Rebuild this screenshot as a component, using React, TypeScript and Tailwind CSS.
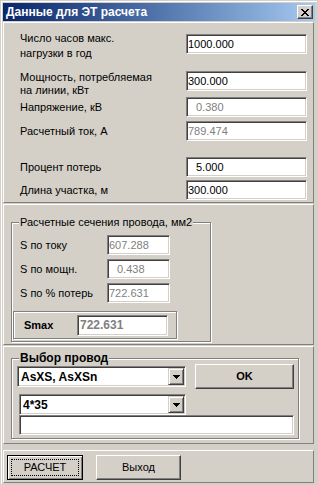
import React from "react";

type EditProps = {
  text?: string;
  gray?: boolean;
  className: string;
};

// sunken win9x edit box
function Edit({ text = "", gray, className }: EditProps) {
  return (
    <div
      className={`flex shrink-0 items-center overflow-hidden whitespace-pre border border-t-[#808080] border-l-[#808080] border-b-white border-r-white bg-white leading-none shadow-[inset_1px_1px_0_#404040,inset_-1px_-1px_0_#d4d0c8] ${
        gray ? "text-[#808080]" : "text-black"
      } ${className}`}
    >
      {text}
    </div>
  );
}

function DownArrow() {
  return (
    <svg width="7" height="4" viewBox="0 0 7 4" shapeRendering="crispEdges" fill="#000">
      <rect x="0" y="0" width="7" height="1" />
      <rect x="1" y="1" width="5" height="1" />
      <rect x="2" y="2" width="3" height="1" />
      <rect x="3" y="3" width="1" height="1" />
    </svg>
  );
}

function CloseGlyph() {
  const rows = [
    [0, 6],
    [1, 5],
    [2, 4],
    [3, 3],
    [2, 4],
    [1, 5],
    [0, 6],
  ];
  return (
    <svg width="8" height="7" viewBox="0 0 8 7" shapeRendering="crispEdges" fill="#000">
      {rows.map(([a, b], i) => (
        <g key={i}>
          <rect x={a} y={i} width="2" height="1" />
          <rect x={b} y={i} width="2" height="1" />
        </g>
      ))}
    </svg>
  );
}

function Combo({ text, className }: { text: string; className: string }) {
  return (
    <div
      className={`flex shrink-0 items-stretch border border-t-[#808080] border-l-[#808080] border-b-white border-r-white bg-white p-[1px] shadow-[inset_1px_1px_0_#404040,inset_-1px_-1px_0_#d4d0c8] ${className}`}
    >
      <span className="flex flex-1 items-center pl-[2px] text-[12px] font-bold leading-none">{text}</span>
      <div className="flex w-[16px] items-center justify-center border border-t-[#d4d0c8] border-l-[#d4d0c8] border-b-[#404040] border-r-[#404040] bg-[#d4d0c8] shadow-[inset_1px_1px_0_#fff,inset_-1px_-1px_0_#808080]">
        <DownArrow />
      </div>
    </div>
  );
}

function Panel({ className, children }: { className: string; children?: React.ReactNode }) {
  return (
    <div className={`w-[311px] border border-t-white border-l-white border-b-[#808080] border-r-[#808080] ${className}`}>
      {children}
    </div>
  );
}

function Group({ title, bold, className, children }: { title: string; bold?: boolean; className: string; children?: React.ReactNode }) {
  return (
    <div className={`relative border border-[#808080] shadow-[inset_1px_1px_0_#fff,1px_1px_0_#fff] ${className}`}>
      <span
        className={`absolute left-[7px] top-[-8px] bg-[#d4d0c8] px-[1px] leading-[14px] ${
          bold ? "text-[12px] font-bold" : "text-[11px]"
        }`}
      >
        {title}
      </span>
      {children}
    </div>
  );
}

function Row({ label, className, labelClass, children }: { label: React.ReactNode; className: string; labelClass: string; children: React.ReactNode }) {
  return (
    <div className={`flex h-[20px] items-center ${className}`}>
      <div className={`shrink-0 ${labelClass}`}>{label}</div>
      {children}
    </div>
  );
}

export default function App() {
  return (
    <div className="h-[485px] w-[318px] overflow-hidden bg-[#d4d0c8] p-[1px] font-['Liberation_Sans',Arial,sans-serif] text-[11px] text-black">
      <div className="h-full border-l border-t border-white pl-[1px] pt-[1px]">
        {/* Title bar */}
        <div className="flex h-[18px] w-[312px] items-center bg-linear-to-r from-[#0a246a] to-[#a6caf0] pl-[3px]">
          <span className="flex-1 text-[12px] font-bold leading-none text-white">Данные для ЭТ расчета</span>
          <div className="mr-[2px] flex h-[14px] w-[16px] items-center justify-center border border-t-white border-l-white border-b-[#404040] border-r-[#404040] bg-[#d4d0c8] shadow-[inset_-1px_-1px_0_#808080]">
            <CloseGlyph />
          </div>
        </div>

        {/* Input parameters */}
        <Panel className="mt-[1px] h-[181px]">
          <Row
            className="mt-[11px]"
            labelClass="w-[182px] pl-[16px] pt-[4px] leading-[15px]"
            label={
              <>
                Число часов макс.
                <br />
                нагрузки в год
              </>
            }
          >
            <Edit text="1000.000" className="h-full w-[121px] pl-[1px]" />
          </Row>
          <Row
            className="mt-[17px]"
            labelClass="w-[182px] pl-[16px] pt-[5px] leading-[13px]"
            label={
              <>
                Мощность, потребляемая
                <br />
                на линии, кВт
              </>
            }
          >
            <Edit text="300.000" className="h-full w-[121px] pl-[1px]" />
          </Row>
          <Row className="mt-[6px]" labelClass="w-[182px] pl-[16px] leading-[13px]" label="Напряжение, кВ">
            <Edit text="0.380" gray className="h-full w-[121px] pl-[9px]" />
          </Row>
          <Row className="mt-[4px]" labelClass="w-[182px] pl-[16px] leading-[13px]" label="Расчетный ток, А">
            <Edit text="789.474" gray className="h-full w-[121px] pl-[1px]" />
          </Row>
          <Row className="mt-[16px]" labelClass="w-[182px] pl-[16px] leading-[13px]" label="Процент потерь">
            <Edit text="5.000" className="h-full w-[121px] pl-[9px]" />
          </Row>
          <Row className="mt-[3px]" labelClass="w-[182px] pl-[16px] leading-[13px]" label="Длина участка, м">
            <Edit text="300.000" className="h-full w-[121px] pl-[1px]" />
          </Row>
        </Panel>

        {/* Calculated sections */}
        <Panel className="mt-[1px] h-[141px]">
          <Group title="Расчетные сечения провода, мм2" className="ml-[7px] mt-[17px] h-[120px] w-[200px]">
            <Row className="mt-[12px]" labelClass="w-[95px] pl-[8px] leading-[13px]" label="S по току">
              <Edit text="607.288" gray className="h-full w-[63px] pl-[1px]" />
            </Row>
            <Row className="mt-[4px]" labelClass="w-[95px] pl-[8px] leading-[13px]" label="S по мощн.">
              <Edit text="0.438" gray className="h-full w-[63px] pl-[9px]" />
            </Row>
            <Row className="mt-[4px]" labelClass="w-[95px] pl-[8px] leading-[13px]" label="S по % потерь">
              <Edit text="722.631" gray className="h-full w-[63px] pl-[1px]" />
            </Row>
            <div className="ml-[1px] mt-[8px] flex h-[28px] w-[164px] items-center border border-[#808080] shadow-[inset_1px_1px_0_#fff,1px_1px_0_#fff]">
              <span className="w-[63px] shrink-0 pl-[10px] font-bold leading-[13px]">Smax</span>
              <Edit text="722.631" gray className="h-[21px] w-[91px] pl-[2px] text-[12px] font-bold" />
            </div>
          </Group>
        </Panel>

        {/* Wire choice */}
        <Panel className="mt-[1px] h-[98px]">
          <Group title="Выбор провод" bold className="ml-[7px] mt-[11px] h-[81px] w-[288px]">
            <div className="mt-[5px] flex h-[25px] items-center">
              <Combo text="AsXS, AsXSn" className="ml-[5px] h-[21px] w-[169px]" />
              <div className="ml-[9px] flex h-[25px] w-[99px] items-center justify-center border border-t-white border-l-white border-b-[#404040] border-r-[#404040] font-bold shadow-[inset_-1px_-1px_0_#808080]">
                OK
              </div>
            </div>
            <Combo text="4*35" className="ml-[7px] mt-[5px] h-[21px] w-[167px]" />
            <Edit className="ml-[7px] h-[20px] w-[275px]" />
          </Group>
        </Panel>

        {/* Buttons */}
        <Panel className="mt-[6px] h-[33px]">
          <div className="mt-[4px] flex pl-[3px]">
            <div className="flex h-[25px] w-[76px] items-center justify-center border border-black p-[3px] shadow-[inset_1px_1px_0_#fff,inset_-1px_-1px_0_#808080]">
              <div className="flex h-full w-full items-center justify-center border border-dotted border-black leading-none">
                РАСЧЕТ
              </div>
            </div>
            <div className="ml-[13px] flex h-[25px] w-[85px] items-center justify-center border border-t-white border-l-white border-b-[#404040] border-r-[#404040] leading-none shadow-[inset_-1px_-1px_0_#808080]">
              Выход
            </div>
          </div>
        </Panel>
      </div>
    </div>
  );
}
